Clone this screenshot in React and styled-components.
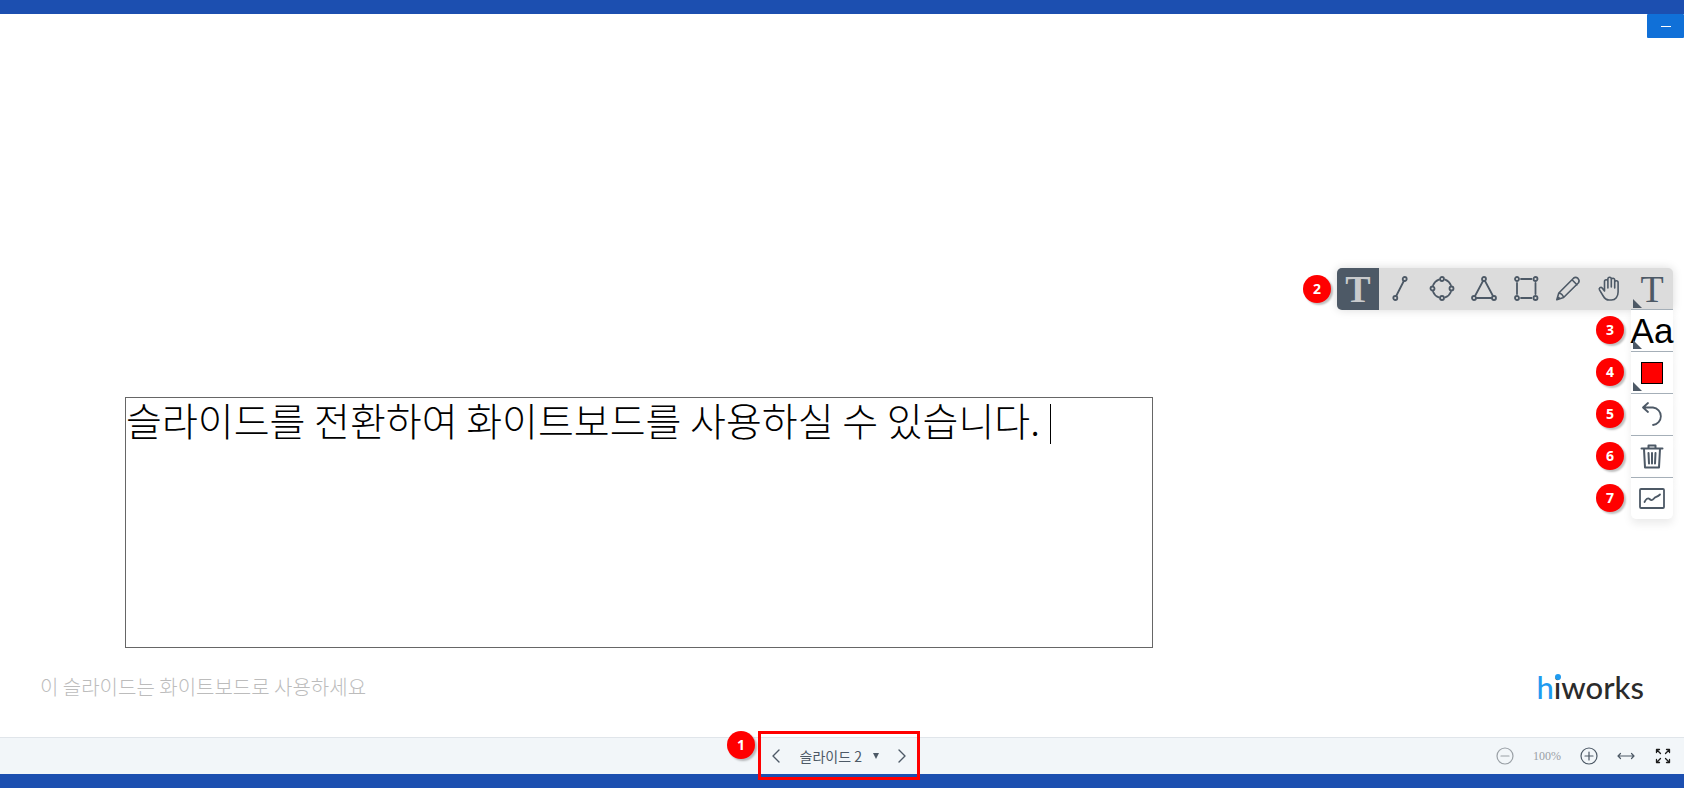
import React, { useState } from "react";
import styled, { createGlobalStyle } from "styled-components";

const GlobalStyle = createGlobalStyle`
  * {
    box-sizing: border-box;
  }
  body {
    margin: 0;
    background: #fff;
    font-family: "Noto Sans CJK KR", sans-serif;
  }
  button {
    padding: 0;
    border: none;
    background: none;
    color: inherit;
    font: inherit;
    cursor: pointer;
  }
`;

const Page = styled.div`
  display: flex;
  flex-flow: column;
  min-height: 100vh;
`;
const Band = styled.div`
  height: 14px;
  background: #1c4fb0;
`;
const Board = styled.main`
  position: relative;
  display: flex;
  flex: 1;
  flex-flow: column;
  justify-content: space-between;
`;
const Minimize = styled.button`
  display: flex;
  align-items: center;
  justify-content: center;
  align-self: flex-end;
  width: 37px;
  height: 24px;
  border-radius: 1px;
  background: #1070d8;
`;
const Dash = styled.span`
  width: 10px;
  height: 1px;
  background: #fff;
`;
const Note = styled.div`
  position: absolute;
  top: 383px;
  left: 125px;
  width: 1028px;
  height: 251px;
`;
const NoteText = styled.textarea`
  display: block;
  width: 100%;
  height: 100%;
  padding: 0;
  border: 1px solid #666;
  border-radius: 0;
  outline: none;
  resize: none;
  background: transparent;
  color: #000;
  font-family: "Noto Sans CJK KR", sans-serif;
  font-size: 39px;
  font-weight: 300;
  line-height: 42px;
`;
const Caret = styled.span`
  position: absolute;
  top: 7px;
  left: 925px;
  width: 1px;
  height: 40px;
  background: #000;
`;
const SlideFooter = styled.div`
  display: flex;
  align-items: center;
  justify-content: space-between;
  padding: 0 40px 34px;
`;
const Hint = styled.p`
  margin: 0;
  color: #bcbcbc;
  font-size: 20px;
  font-weight: 300;
  line-height: 32px;
`;
const Logo = styled.div`
  color: #2b2b2b;
  font-family: Lato, sans-serif;
  font-size: 31px;
  font-weight: 500;
  line-height: 32px;
`;
const LogoBlue = styled.span`
  color: #1f9bf0;
`;
const LogoI = styled.span`
  position: relative;

  &::after {
    content: "";
    position: absolute;
    top: 6px;
    left: 1px;
    width: 6px;
    height: 6px;
    border-radius: 50%;
    background: #1f9bf0;
  }
`;

const Tools = styled.div`
  position: absolute;
  top: 254px;
  right: 11px;
  display: flex;
  flex-flow: column;
  align-items: flex-end;
  color: #4d5966;
`;
const ToolRow = styled.div`
  display: flex;
  align-items: center;
  gap: ${(props) => (props.$wide ? "6px" : "7px")};
`;
const SideRows = styled.div`
  position: relative;
  margin-top: -1px;
`;
const ToolBar = styled.div`
  display: flex;
  overflow: hidden;
  border-radius: 5px 5px 0 5px;
  background: #dcdcdc;
  box-shadow: 0 0 10px rgba(0, 0, 0, 0.15);
`;
const Tool = styled.button`
  position: relative;
  display: flex;
  align-items: center;
  justify-content: center;
  width: 42px;
  height: 42px;
  color: ${(props) => (props.$active ? "#c9cbcd" : "#4d5966")};
  background: ${(props) => (props.$active ? "#4d5966" : "transparent")};
`;
const SideTool = styled(Tool)`
  border-top: 1px solid #a5afb8;
  border-radius: ${(props) => (props.$last ? "0 0 5px 5px" : "0")};
  background: #fff;
  box-shadow: 0 5px 8px rgba(0, 0, 0, 0.08);
`;
const Letter = styled.span`
  font-family: "Liberation Serif", serif;
  font-size: 38px;
  font-weight: ${(props) => (props.$bold ? 700 : 400)};
  line-height: 40px;
`;
const Sample = styled.span`
  color: #000;
  font-family: "Liberation Sans", sans-serif;
  font-size: 35px;
  line-height: 40px;
`;
const Swatch = styled.span`
  width: 22px;
  height: 22px;
  border: 1px solid #000;
  background: #f00;
`;
const Corner = styled.span`
  position: absolute;
  bottom: 2px;
  left: 2px;
  border-bottom: 9px solid #4d5966;
  border-right: 9px solid transparent;
`;
const Badge = styled.span`
  display: flex;
  align-items: center;
  justify-content: center;
  width: 28px;
  height: 28px;
  border-radius: 50%;
  background: #f00;
  box-shadow: 2px 2px 2px rgba(0, 0, 0, 0.25);
  color: #fff;
  font-family: "Noto Sans", sans-serif;
  font-size: 14px;
  font-weight: 700;
  line-height: 28px;
`;

const Controls = styled.div`
  display: grid;
  grid-template-columns: 1fr auto 1fr;
  align-items: center;
  height: 37px;
  padding: 0 12px 0 6px;
  border-top: 1px solid #e0e5ea;
  background: #f2f6f9;
  color: #4d5966;
`;
const SlideNav = styled.nav`
  position: relative;
  display: flex;
  grid-column: 2;
  align-items: center;
  width: 162px;
  height: 36px;
  padding: 0 9px;
`;
const Highlight = styled.span`
  position: absolute;
  top: -7px;
  left: 0;
  width: 162px;
  height: 49px;
  border: 3px solid #f00;
  pointer-events: none;
`;
const NavBadge = styled(Badge)`
  position: absolute;
  top: -7px;
  left: -31px;
`;
const IconButton = styled.button`
  display: flex;
  align-items: center;
  justify-content: center;
  width: 18px;
  height: 18px;
  color: ${(props) => (props.$color ? props.$color : "#4d5966")};
`;
const SlidePicker = styled.label`
  display: flex;
  flex: 1;
  align-items: center;
  justify-content: center;
  gap: 10px;
`;
const SlideSelect = styled.select`
  padding: 0;
  border: none;
  outline: none;
  appearance: none;
  background: transparent;
  color: #4d5966;
  font-family: "Noto Sans CJK KR", sans-serif;
  font-size: 14px;
  font-weight: 400;
  line-height: 24px;
`;
const ZoomTools = styled.div`
  display: flex;
  grid-column: 3;
  align-items: center;
  justify-content: flex-end;
  gap: 19px;
`;
const ZoomValue = styled.span`
  color: #9aa0a6;
  font-family: "Liberation Serif", serif;
  font-size: 12px;
`;

function Icon({ size = 28, width = 1.8, children }) {
  return (
    <svg
      width={size}
      height={size}
      viewBox={`0 0 ${size} ${size}`}
      fill="none"
      stroke="currentColor"
      strokeWidth={width}
      strokeLinecap="round"
      strokeLinejoin="round"
      aria-hidden="true"
    >
      {children}
    </svg>
  );
}

function Nodes({ points }) {
  return points.map(([x, y]) => <circle key={`${x}-${y}`} cx={x} cy={y} r="2" />);
}

const drawTools = [
  { id: "text", label: "텍스트", icon: <Letter $bold>T</Letter> },
  {
    id: "line",
    label: "선",
    icon: (
      <Icon>
        <path d="M17.8 6L10.2 21" />
        <Nodes points={[[18.7, 4], [9.3, 23]]} />
      </Icon>
    ),
  },
  {
    id: "ellipse",
    label: "원",
    icon: (
      <Icon>
        <path d="M17.2 4.6a9.5 9.5 0 0 1 5.7 5.7M22.9 16.7a9.5 9.5 0 0 1-5.7 5.7M10.8 22.4a9.5 9.5 0 0 1-5.7-5.7M5.1 10.3a9.5 9.5 0 0 1 5.7-5.7" />
        <Nodes points={[[14, 4], [23.5, 13.5], [14, 23], [4.5, 13.5]]} />
      </Icon>
    ),
  },
  {
    id: "triangle",
    label: "삼각형",
    icon: (
      <Icon>
        <path d="M13 6L5 21M15 6l8 15M6.5 23h15" />
        <Nodes points={[[14, 4], [4, 23], [24, 23]]} />
      </Icon>
    ),
  },
  {
    id: "rect",
    label: "사각형",
    icon: (
      <Icon>
        <path d="M9 4h10.5M9 23h10.5M5 8v11M23.5 8v11" />
        <Nodes points={[[5, 4], [23.5, 4], [5, 23], [23.5, 23]]} />
      </Icon>
    ),
  },
  {
    id: "pencil",
    label: "연필",
    icon: (
      <Icon width={1.6}>
        <path d="M2.8 24.7L4.8 18L19.5 3.2Q21.500 1.500 23.800 3.200Q26 5.500 24.500 7.700L9.600 22.500ZM18 4.800l5 5M4.800 18q3.800.700 4.800 4.500M2.800 24.700l2.200-2.200" />
      </Icon>
    ),
  },
  {
    id: "hand",
    label: "이동",
    icon: (
      <Icon width={1.6}>
        <path d="M8.500 16V6.500a1.600 1.600 0 0 1 3.400 0V13M11.900 12V4a1.600 1.600 0 0 1 3.400 0V12M15.300 12V5a1.600 1.600 0 0 1 3.400 0V13M18.700 13V7.500a1.600 1.600 0 0 1 3.400 0V17C22.100 21.500 19.500 25 15.500 25H13C10 25 8.600 23.500 7.200 21L3.500 14.800C2.500 13 4.800 11.600 6.200 13L8.500 16" />
      </Icon>
    ),
  },
];

const sideTools = [
  {
    id: 3,
    label: "글꼴 크기",
    corner: true,
    icon: <Sample>Aa</Sample>,
  },
  { id: 4, label: "색상", corner: true, icon: <Swatch /> },
  {
    id: 5,
    label: "실행 취소",
    icon: (
      <Icon>
        <path d="M10 2L5 6.500l5 4.500M5 6.500h10a8.800 8.800 0 0 1 0 17.500" />
      </Icon>
    ),
  },
  {
    id: 6,
    label: "모두 지우기",
    icon: (
      <Icon width={2}>
        <path d="M3.500 5.500h21M10.500 5V2.500h7V5M6 6l1 18.500h14L22 6" />
        <path d="M10.500 10l.5 10.500M14 10v10.500M17.500 10l-.5 10.500" />
      </Icon>
    ),
  },
  {
    id: 7,
    label: "다중 사용자 화이트보드",
    icon: (
      <Icon>
        <rect x="2" y="4" width="24" height="19" rx="1" />
        <path d="M6.500 17c1.500-3 3.500-4.500 5-3s3 1.500 4.500-.5s3-1 6-4" />
      </Icon>
    ),
  },
];

function App() {
  const [tool, setTool] = useState("text");
  const [slide, setSlide] = useState("2");
  const [note, setNote] = useState(
    "슬라이드를 전환하여 화이트보드를 사용하실 수 있습니다."
  );

  return (
    <Page>
      <GlobalStyle />
      <Band />
      <Board>
        <Minimize aria-label="최소화">
          <Dash />
        </Minimize>

        <Note>
          <NoteText
            aria-label="텍스트"
            spellCheck={false}
            value={note}
            onChange={(e) => setNote(e.target.value)}
          />
          <Caret />
        </Note>

        <Tools>
          <ToolRow $wide>
            <Badge>2</Badge>
            <ToolBar>
              {drawTools.map((item) => (
                <Tool
                  key={item.id}
                  aria-label={item.label}
                  $active={item.id === tool}
                  onClick={() => setTool(item.id)}
                >
                  {item.icon}
                </Tool>
              ))}
              <Tool aria-label="도구">
                <Letter>T</Letter>
                <Corner />
              </Tool>
            </ToolBar>
          </ToolRow>
          <SideRows>
            {sideTools.map((item) => (
              <ToolRow key={item.id}>
                <Badge>{item.id}</Badge>
                <SideTool aria-label={item.label} $last={item.id === 7}>
                  {item.icon}
                  {item.corner && <Corner />}
                </SideTool>
              </ToolRow>
            ))}
          </SideRows>
        </Tools>

        <SlideFooter>
          <Hint>이 슬라이드는 화이트보드로 사용하세요</Hint>
          <Logo>
            <LogoBlue>h</LogoBlue>
            <LogoI>i</LogoI>works
          </Logo>
        </SlideFooter>
      </Board>

      <Controls>
        <SlideNav>
          <IconButton aria-label="이전 슬라이드">
            <Icon size={18} width={1.4}>
              <path d="M12 3L6 9l6 6" />
            </Icon>
          </IconButton>
          <SlidePicker>
            <SlideSelect
              aria-label="슬라이드 선택"
              value={slide}
              onChange={(e) => setSlide(e.target.value)}
            >
              <option value="2">슬라이드 2</option>
            </SlideSelect>
            <svg width="6" height="6" viewBox="0 0 6 6" aria-hidden="true">
              <path d="M0 0h6L3 6z" fill="#4d5966" />
            </svg>
          </SlidePicker>
          <IconButton aria-label="다음 슬라이드">
            <Icon size={18} width={1.4}>
              <path d="M6 3l6 6l-6 6" />
            </Icon>
          </IconButton>
          <Highlight />
          <NavBadge>1</NavBadge>
        </SlideNav>
        <ZoomTools>
          <IconButton aria-label="축소" $color="#9aa0a6">
            <Icon size={18} width={1.2}>
              <circle cx="9" cy="9" r="8" />
              <path d="M5 9h8" />
            </Icon>
          </IconButton>
          <ZoomValue>100%</ZoomValue>
          <IconButton aria-label="확대">
            <Icon size={18} width={1.2}>
              <circle cx="9" cy="9" r="8" />
              <path d="M5 9h8M9 5v8" />
            </Icon>
          </IconButton>
          <IconButton aria-label="너비에 맞춤">
            <Icon size={18} width={1.2}>
              <path d="M1 9h16M3.500 6.500L1 9l2.500 2.500M14.500 6.500L17 9l-2.500 2.500" />
            </Icon>
          </IconButton>
          <IconButton aria-label="전체 화면" $color="#1c1c1c">
            <Icon size={18} width={1.3}>
              <path d="M2.500 5.500v-3h3M2.500 2.500L6.500 6.500M12.500 2.500h3v3M15.500 2.500l-4 4M2.500 12.500v3h3M2.500 15.500l4-4M15.500 12.500v3h-3M15.500 15.500l-4-4" />
            </Icon>
          </IconButton>
        </ZoomTools>
      </Controls>
      <Band />
    </Page>
  );
}

export default App;
